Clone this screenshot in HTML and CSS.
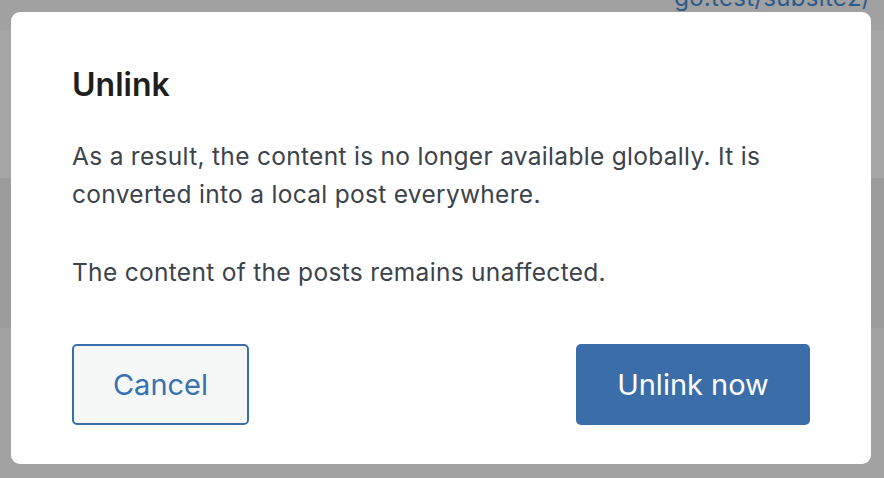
FILE: index.html
```html
<!DOCTYPE html>
<html lang="en">
<head>
<meta charset="utf-8">
<title>Unlink</title>
<link rel="stylesheet" href="styles.css">
</head>
<body>
<div class="page">
  <div class="band band-top"><a class="site-link" href="#">go.test/subsite2/</a></div>
  <div class="band band-a"></div>
  <div class="band band-b"></div>
  <div class="band band-c"></div>
</div>
<div class="modal" role="dialog" aria-labelledby="modal-title">
  <h1 class="modal-title" id="modal-title">Unlink</h1>
  <div class="modal-body">
    <p>As a result, the content is no longer available globally. It is converted into a local post everywhere.</p>
    <p>The content of the posts remains unaffected.</p>
  </div>
  <div class="modal-actions">
    <button class="btn btn-secondary" type="button">Cancel</button>
    <button class="btn btn-primary" type="button">Unlink now</button>
  </div>
</div>
</body>
</html>
```
FILE: styles.css
```css
html, body {
  margin: 0;
  padding: 0;
  height: 100%;
}
body {
  font-family: Inter, "Noto Sans", "Liberation Sans", sans-serif;
  background: #a3a3a3;
  overflow: hidden;
}
.page {
  display: flex;
  flex-direction: column;
  height: 100%;
}
.band-top {
  height: 30px;
  background: #a1a1a1;
  display: flex;
  justify-content: flex-end;
  overflow: hidden;
}
.band-a {
  height: 148px;
  background: #a5a5a5;
}
.band-b {
  height: 150px;
  background: #9c9c9c;
}
.band-c {
  flex: 1;
  background: #a3a3a3;
}
.site-link {
  color: #2c5a8b;
  text-decoration: none;
  font-size: 24px;
  line-height: 24px;
  letter-spacing: 0.3px;
  margin-top: -14px;
  margin-right: 13px;
}
.modal {
  position: fixed;
  left: 11px;
  top: 12px;
  width: 860px;
  height: 452px;
  box-sizing: border-box;
  background: #ffffff;
  border-radius: 9px;
  padding: 53px 61px 39px;
  display: flex;
  flex-direction: column;
}
.modal-title {
  margin: 0;
  font-size: 32px;
  line-height: 40px;
  font-weight: 600;
  color: #1e1e1e;
}
.modal-body {
  margin-top: 32px;
  color: #3c434a;
  font-size: 24.5px;
  letter-spacing: 0.3px;
  line-height: 38px;
}
.modal-body p {
  margin: 0 0 40px;
}
.modal-body p:last-child {
  margin-bottom: 0;
}
.modal-actions {
  margin-top: auto;
  display: flex;
  justify-content: space-between;
  align-items: flex-end;
}
.btn {
  font-family: inherit;
  font-size: 29px;
  height: 81px;
  border-radius: 5px;
  box-sizing: border-box;
  display: flex;
  align-items: center;
  justify-content: center;
  cursor: pointer;
}
.btn-secondary {
  width: 177px;
  background: #f6f7f7;
  color: #3871b0;
  border: 2px solid #3a6ea9;
}
.btn-primary {
  width: 234px;
  background: #3b6ea9;
  color: #ffffff;
  border: 0;
}
```
